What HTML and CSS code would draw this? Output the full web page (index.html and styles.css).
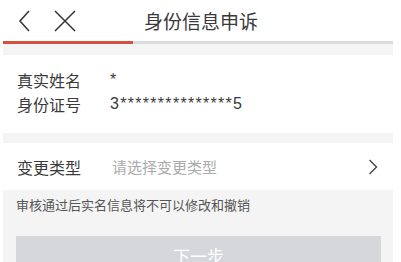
FILE: index.html
```html
<!DOCTYPE html>
<html>
<head>
<meta charset="utf-8">
<link rel="stylesheet" href="styles.css">
</head>
<body>
<div class="page">
  <header class="nav">
    <div class="nav-icons">
      <svg class="icon" width="14" height="22" viewBox="0 0 14 22"><path d="M11 1 L2 11 L11 21" fill="none" stroke="#333" stroke-width="1.5"/></svg>
      <svg class="icon close" width="22" height="22" viewBox="0 0 22 22"><path d="M1 1 L21 21 M21 1 L1 21" fill="none" stroke="#333" stroke-width="1.5"/></svg>
    </div>
    <div class="title">身份信息申诉</div>
  </header>
  <div class="progress"><div class="progress-fill"></div></div>
  <div class="gap gap-top"></div>
  <section class="card info">
    <div class="row"><span class="label">真实姓名</span><span class="value">*</span></div>
    <div class="row"><span class="label">身份证号</span><span class="value id">3***************5</span></div>
  </section>
  <div class="gap"></div>
  <section class="card select">
    <span class="label">变更类型</span>
    <span class="placeholder">请选择变更类型</span>
    <svg class="chev" width="10" height="16" viewBox="0 0 10 16"><path d="M1.5 1 L8.5 8 L1.5 15" fill="none" stroke="#444" stroke-width="1.4"/></svg>
  </section>
  <div class="bottom">
    <p class="note">审核通过后实名信息将不可以修改和撤销</p>
    <div class="btn">下一步</div>
  </div>
</div>
</body>
</html>
```
FILE: styles.css
```css
html, body {
  margin: 0;
  padding: 0;
  background: #fff;
  height: 262px;
  overflow: hidden;
}
body {
  font-family: "Noto Sans CJK SC", "Liberation Sans", sans-serif;
  color: #333;
}
.page {
  width: 390px;
  margin-left: 3px;
  background: #f4f4f4;
  height: 262px;
}
.nav {
  height: 41px;
  background: #fff;
  display: flex;
  align-items: center;
}
.nav-icons {
  display: flex;
  align-items: center;
  gap: 22px;
  padding-left: 15px;
}
.title {
  font-size: 19px;
  margin-left: 68px;
  color: #3a3a3a;
  line-height: 1;
}
.progress {
  height: 3px;
  background: #dcdcdc;
}
.progress-fill {
  width: 130px;
  height: 3px;
  background: #d5503f;
}
.gap {
  height: 10px;
}
.gap-top {
  height: 11px;
}
.card {
  background: #fff;
}
.info {
  height: 78px;
  padding: 13px 0 0 14px;
  box-sizing: border-box;
}
.row {
  display: flex;
  align-items: center;
  height: 24px;
}
.label {
  font-size: 16px;
  width: 93px;
  color: #3a3a3a;
}
.value {
  font-family: "Liberation Sans", sans-serif;
  font-size: 16px;
  color: #3a3a3a;
}
.id {
  letter-spacing: 1.3px;
}
.select {
  height: 47px;
  display: flex;
  align-items: center;
  padding: 0 14px;
}
.placeholder {
  font-size: 15px;
  color: #aaa;
  flex: 1;
  margin-left: 2px;
}
.chev {
  margin-right: 1px;
}
.bottom {
  padding: 0 12px 0 13px;
}
.note {
  margin: 0;
  padding-top: 5px;
  font-size: 13px;
  color: #555;
  height: 46px;
  box-sizing: border-box;
}
.btn {
  height: 40px;
  background: #d5d7da;
  color: #fff;
  font-size: 17px;
  text-align: center;
  line-height: 40px;
}
```
